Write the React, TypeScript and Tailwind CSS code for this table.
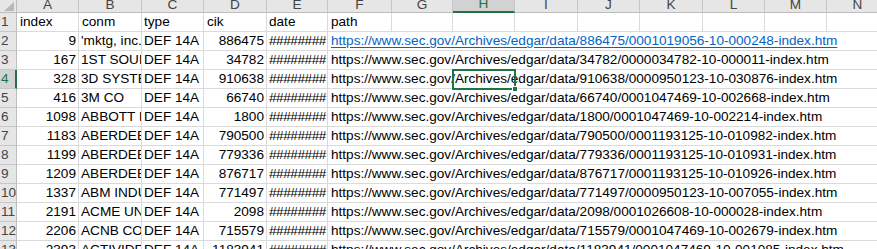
import React from "react";

const COLS = ["A", "B", "C", "D", "E", "F", "G", "H", "I", "J", "K", "L", "M", "N"];
const W = [
  "w-[62px]",
  "w-[63px]",
  "w-[62px]",
  "w-[63px]",
  "w-[61px]",
  "w-[64px]",
  "w-[61px]",
  "w-[62px]",
  "w-[63px]",
  "w-[62px]",
  "w-[63px]",
  "w-[62px]",
  "w-[62px]",
  "w-[62px]",
];

type Row = [string, string, string, string, string];

const DATA: Row[] = [
  ["9", "'mktg, inc.", "886475", "0001019056-10-000248", "link"],
  ["167", "1ST SOURCE CORP", "34782", "0000034782-10-000011", ""],
  ["328", "3D SYSTEMS CORP", "910638", "0000950123-10-030876", ""],
  ["416", "3M CO", "66740", "0001047469-10-002668", ""],
  ["1098", "ABBOTT LABORATORIES", "1800", "0001047469-10-002214", ""],
  ["1183", "ABERDEEN ASIA-PACIFIC INCOME FUND", "790500", "0001193125-10-010982", ""],
  ["1199", "ABERDEEN AUSTRALIA EQUITY FUND", "779336", "0001193125-10-010931", ""],
  ["1209", "ABERDEEN GLOBAL INCOME FUND", "876717", "0001193125-10-010926", ""],
  ["1337", "ABM INDUSTRIES INC", "771497", "0000950123-10-007055", ""],
  ["2191", "ACME UNITED CORP", "2098", "0001026608-10-000028", ""],
  ["2206", "ACNB CORP", "715579", "0001047469-10-002679", ""],
  ["2393", "ACTIVIDENTITY CORP", "1183941", "0001047469-10-001085", ""],
];

const cell =
  "shrink-0 h-full border-r border-b border-[#dadada] overflow-hidden whitespace-nowrap leading-[18px]";

function RowHeader({ n, selected }: { n: number; selected?: boolean }) {
  return (
    <div
      className={
        selected
          ? "w-[17px] shrink-0 h-full bg-[#d2d2d2] border-b border-[#c6c6c6] border-r-2 border-r-[#217346] text-[#217346] pl-[1px] leading-[18px]"
          : "w-[17px] shrink-0 h-full bg-[#e6e6e6] border-b border-[#c6c6c6] border-r border-r-[#bdbdbd] text-[#444] pl-[1px] leading-[18px]"
      }
    >
      {n}
    </div>
  );
}

export default function App() {
  return (
    <div className="relative w-[877px] h-[249px] overflow-hidden bg-white font-['Liberation_Sans',Arial,sans-serif] text-[13.6px] text-black">
      {/* column header */}
      <div className="flex h-[13px]">
        <div className="w-[17px] shrink-0 h-full bg-[#e6e6e6] border-r border-b border-[#bdbdbd] flex items-end justify-end pr-[2px] pb-[1px]">
          <svg width="10" height="9" viewBox="0 0 10 9">
            <polygon points="10,0 10,9 0,9" fill="#b8b8b8" />
          </svg>
        </div>
        {COLS.map((c, i) =>
          c === "H" ? (
            <div
              key={c}
              className={`${W[i]} shrink-0 h-full bg-[#d2d2d2] border-r border-[#c6c6c6] border-b-2 border-b-[#217346] text-[#217346] flex items-end justify-center leading-none`}
            >
              {c}
            </div>
          ) : (
            <div
              key={c}
              className={`${W[i]} shrink-0 h-full bg-[#e6e6e6] border-r border-[#c6c6c6] border-b border-b-[#bdbdbd] text-[#444] flex items-end justify-center leading-none`}
            >
              {c}
            </div>
          )
        )}
      </div>

      {/* row 1 */}
      <div className="flex h-[19px]">
        <RowHeader n={1} />
        <div className={`${cell} ${W[0]} pl-[3px]`}>index</div>
        <div className={`${cell} ${W[1]} pl-[3px]`}>conm</div>
        <div className={`${cell} ${W[2]} pl-[2px]`}>type</div>
        <div className={`${cell} ${W[3]} pl-[3px]`}>cik</div>
        <div className={`${cell} ${W[4]} pl-[2px]`}>date</div>
        <div className={`${cell} ${W[5]} pl-[3px]`}>path</div>
        {COLS.slice(6).map((c, j) => (
          <div key={c} className={`${cell} ${W[j + 6]}`} />
        ))}
      </div>

      {/* data rows */}
      {DATA.map((r, idx) => {
        const url = `https://www.sec.gov/Archives/edgar/data/${r[2]}/${r[3]}-index.htm`;
        return (
          <div key={idx} className="flex h-[19px]">
            <RowHeader n={idx + 2} selected={idx + 2 === 4} />
            <div className={`${cell} ${W[0]} text-right pr-[2px]`}>{r[0]}</div>
            <div className={`${cell} ${W[1]} pl-[2px]`}>{r[1]}</div>
            <div className={`${cell} ${W[2]} pl-[2px]`}>DEF 14A</div>
            <div className={`${cell} ${W[3]} text-right pr-[2px]`}>{r[2]}</div>
            <div className={`${cell} ${W[4]} pl-[2px] tracking-[-0.45px]`}>########</div>
            <div className="flex-1 min-w-0 h-full border-b border-[#dadada] overflow-hidden whitespace-nowrap leading-[18px] pl-[3px]">
              {r[4] === "link" ? (
                <span className="text-[#0563c1] underline underline-offset-[2px]">{url}</span>
              ) : (
                url
              )}
            </div>
          </div>
        );
      })}

      {/* selected cell H4 */}
      <div className="absolute left-[452px] top-[69px] w-[64px] h-[21px] border-2 border-[#217346]">
        <div className="absolute right-[-4px] bottom-[-4px] w-[6px] h-[6px] bg-[#217346] border border-white" />
      </div>
    </div>
  );
}
